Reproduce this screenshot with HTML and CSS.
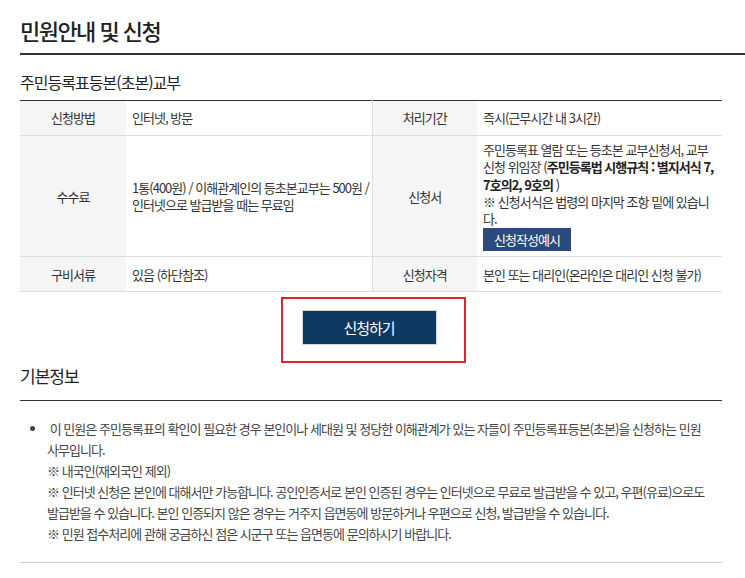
FILE: index.html
```html
<!DOCTYPE html>
<html lang="ko">
<head>
<meta charset="utf-8">
<title>민원안내 및 신청</title>
<link rel="stylesheet" href="styles.css">
</head>
<body>
<div class="page">
  <h2 class="page-title">민원안내 및 신청</h2>
  <h3 class="sub-title">주민등록표등본(초본)교부</h3>
  <table class="info">
    <colgroup>
      <col class="c-label1"><col class="c-value1"><col class="c-label2"><col class="c-value2">
    </colgroup>
    <tr class="r1">
      <th>신청방법</th>
      <td>인터넷, 방문</td>
      <th>처리기간</th>
      <td>즉시(근무시간 내 3시간)</td>
    </tr>
    <tr>
      <th>수수료</th>
      <td class="fee-cell">1통(400원) / 이해관계인의 등초본교부는 500원 / 인터넷으로 발급받을 때는 무료임</td>
      <th>신청서</th>
      <td class="form-cell">주민등록표 열람 또는 등초본 교부신청서, 교부 신청 위임장 (<strong>주민등록법 시행규칙 : 별지서식 7, 7호의2, 9호의</strong> )<br>※ 신청서식은 법령의 마지막 조항 밑에 있습니다.<br><button class="sample-btn">신청작성예시</button></td>
    </tr>
    <tr class="r3">
      <th>구비서류</th>
      <td>있음 (하단참조)</td>
      <th>신청자격</th>
      <td>본인 또는 대리인(온라인은 대리인 신청 불가)</td>
    </tr>
  </table>
  <div class="apply-row">
    <div class="apply-box"><button class="apply-btn">신청하기</button></div>
  </div>
  <h3 class="section-title">기본정보</h3>
  <div class="basic">
    <ul>
      <li>&nbsp;이 민원은 주민등록표의 확인이 필요한 경우 본인이나 세대원 및 정당한 이해관계가 있는 자들이 주민등록표등본(초본)을 신청하는 민원 사무입니다.<br>※ 내국인(재외국인 제외)<br>※ 인터넷 신청은 본인에 대해서만 가능합니다. 공인인증서로 본인 인증된 경우는 인터넷으로 무료로 발급받을 수 있고, 우편(유료)으로도 발급받을 수 있습니다. 본인 인증되지 않은 경우는 거주지 읍면동에 방문하거나 우편으로 신청, 발급받을 수 있습니다.<br>※ 민원 접수처리에 관해 궁금하신 점은 시군구 또는 읍면동에 문의하시기 바랍니다.</li>
    </ul>
  </div>
</div>
</body>
</html>
```
FILE: styles.css
```css
* { box-sizing: border-box; }
html, body { margin: 0; padding: 0; background: #fff; }
body {
  font-family: "Noto Sans CJK KR", "Noto Sans", sans-serif;
  color: #333;
  font-size: 13px;
  letter-spacing: -0.075em;
  overflow: hidden;
}
.page {
  width: 725px;
  margin-left: 20px;
}
.page-title {
  margin: 15px 0 0 0;
  padding: 0 0 8px 0;
  font-size: 22px;
  line-height: 30px;
  font-weight: 500;
  letter-spacing: -0.07em;
  color: #222;
  border-bottom: 2px solid #333;
}
.sub-title {
  margin: 16px 0 7px 0;
  font-size: 16px;
  line-height: 22px;
  font-weight: 400;
  color: #222;
}
.info {
  width: 702px;
  border-collapse: collapse;
  table-layout: fixed;
  border-top: 1px solid #333;
  border-bottom: 1px solid #333;
}
.c-label1 { width: 106px; }
.c-value1 { width: 246px; }
.c-label2 { width: 105px; }
.c-value2 { width: 245px; }
.info th, .info td {
  border-bottom: 1px solid #ddd;
  line-height: 17.3px;
  vertical-align: middle;
  font-size: 13px;
}
.info th {
  background: #f5f5f5;
  font-weight: 400;
  text-align: center;
  color: #333;
  padding: 0 4px;
}
.info td {
  text-align: left;
  padding: 5px 6px;
  color: #333;
}
.info td.fee-cell { padding: 5px 1px 5px 6px; }
.info td + th { border-left: 1px solid #ddd; }
.info tr.r1 th, .info tr.r1 td { height: 35px; }
.info tr.r3 th, .info tr.r3 td { height: 35px; }
.form-cell { padding: 6px 8px 5px 6px; }
.form-cell strong { font-weight: 700; color: #222; }
.sample-btn {
  display: inline-block;
  margin-top: 1px;
  width: 88px;
  height: 23px;
  padding: 0;
  border: 0;
  background: #2b4b7e;
  color: #fff;
  font-family: inherit;
  font-size: 13px;
  letter-spacing: -0.075em;
  line-height: 23px;
  vertical-align: top;
}
.apply-row {
  display: flex;
  justify-content: center;
  width: 702px;
  padding: 5px 0 0 0;
}
.apply-box {
  width: 185px;
  height: 66px;
  border: 2px solid #e4232b;
  padding: 11px 27px 16px 19px;
  margin-left: 4px;
}
.apply-btn {
  display: block;
  width: 135px;
  height: 35px;
  border: 1px solid #d6d6d6;
  background: #0e3a62;
  color: #fff;
  font-family: inherit;
  font-size: 15px;
  letter-spacing: -0.07em;
  padding: 0;
}
.section-title {
  margin: 1px 0 0 0;
  padding: 0 0 12px 0;
  width: 702px;
  font-size: 17px;
  line-height: 24px;
  font-weight: 400;
  color: #222;
  border-bottom: 1px solid #333;
}
.basic {
  width: 702px;
  padding: 17px 0 18px 0;
  border-bottom: 1px solid #cfcfcf;
}
.basic ul {
  margin: 0;
  padding: 0 12px 0 27px;
  list-style: disc;
}
.basic li {
  line-height: 21px;
  font-size: 13px;
  color: #444;
}
```
